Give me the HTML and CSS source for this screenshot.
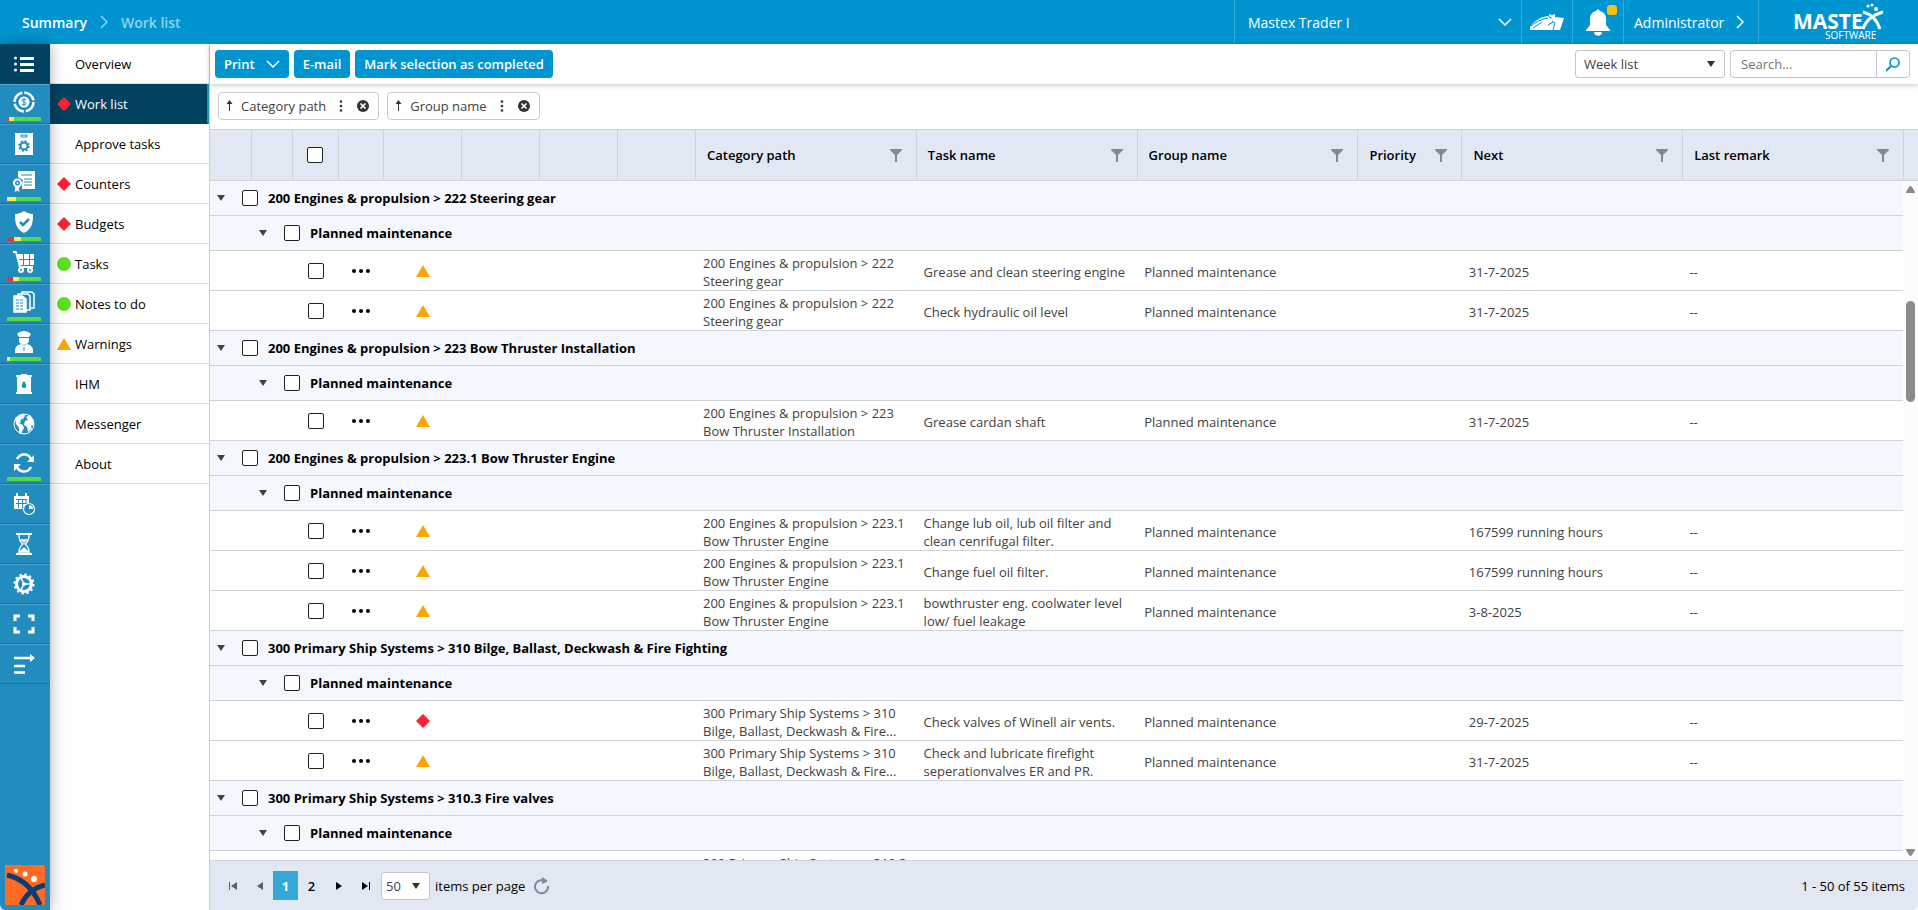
FILE: index.html
```html
<!DOCTYPE html>
<html lang="en">

<head>
    <meta charset="UTF-8">
    <meta name="viewport" content="width=device-width, initial-scale=1.0">
    <title>Work list</title>
    <link rel="stylesheet" href="styles.css">
</head>

<body>
    <!-- shared icons -->
    <svg class="sprite" aria-hidden="true">
        <symbol id="warning" viewBox="0 0 14 12"><path d="M7 0l7 12H0z" fill="#ffa400" /></symbol>
        <symbol id="alert" viewBox="0 0 14 14"><path d="M7 0l7 7-7 7-7-7z" fill="#fd2033" /></symbol>
        <symbol id="ok" viewBox="0 0 14 14"><circle cx="7" cy="7" r="7" fill="#5be022" /></symbol>
        <symbol id="dots" viewBox="0 0 18 4"><circle cx="2" cy="2" r="2" /><circle cx="9" cy="2" r="2" /><circle cx="16" cy="2" r="2" /></symbol>
        <symbol id="caret" viewBox="0 0 8 6"><path d="M0 0h8L4 6z" /></symbol>
        <symbol id="filter" viewBox="0 0 12 13"><path d="M0 0h12v1L7 6v7H5V6L0 1z" /></symbol>
        <symbol id="up" viewBox="0 0 7 12"><path d="M3 11V4H.5l3-4 3 4H4v7z" /></symbol>
        <symbol id="more" viewBox="0 0 4 12"><circle cx="2" cy="1.500" r="1.300" /><circle cx="2" cy="6" r="1.300" /><circle cx="2" cy="10.500" r="1.300" /></symbol>
        <symbol id="remove" viewBox="0 0 12 12"><circle cx="6" cy="6" r="6" /><path d="M3.500 3.500l5 5m0-5l-5 5" stroke="#fff" stroke-width="1.700" /></symbol>
        <symbol id="down" viewBox="0 0 14 8"><path d="M1 1l6 6 6-6" fill="none" stroke="currentColor" stroke-width="1.500" /></symbol>
        <symbol id="next" viewBox="0 0 8 14"><path d="M1 1l6 6-6 6" fill="none" stroke="currentColor" stroke-width="1.500" /></symbol>
    </svg>

    <header class="topbar">
        <nav class="breadcrumb">
            <a href="#">Summary</a>
            <svg width="8" height="14"><use href="#next" /></svg>
            <span>Work list</span>
        </nav>
        <button class="top-item vessel">Mastex Trader I <svg width="14" height="8"><use href="#down" /></svg></button>
        <button class="top-item top-icon" aria-label="Vessels">
            <svg width="34" height="17" viewBox="0 0 34 17" fill="#fff">
                <path d="M0 16v-3C4 7 10 3 18 2l2 2 3 1-1 3-4 3-1 5z" />
                <path d="M19 0l3 1 3-1v3l9 1-1 3-3 9H16l2-5 5-3-1-4-3-2z" />
                <path d="M1 12C6 8 11 5 18 4M3 14l9-6M18 11l5-3 2 1-2 7" fill="none" stroke="#0095d0" stroke-width="1" />
            </svg>
        </button>
        <button class="top-item top-icon" aria-label="Notifications">
            <svg width="24" height="27" viewBox="0 0 24 27" fill="#fff">
                <path d="M12 0l2 2c4 1 6 4 6 8v6l4 5v1H0v-1l4-5v-6c0-4 2-7 6-8zM8 23h8c0 5-8 5-8 0z" />
            </svg>
            <span class="badge"></span>
        </button>
        <button class="top-item user">Administrator <svg width="8" height="14"><use href="#next" /></svg></button>
        <div class="top-item brand">
            <svg width="92" height="38" viewBox="0 0 92 38" fill="#fff">
                <text x="0" y="26" class="brand-name">MASTE</text>
                <text x="32" y="36" class="brand-sub">SOFTWARE</text>
                <path d="M70 9c8 2 14 8 17 17M70 26c3-9 9-14 20-17" fill="none" stroke="#fff" stroke-width="3" />
                <circle cx="75" cy="3" r="1.500" /><circle cx="79" cy="2" r="1.500" /><circle cx="83" cy="6" r="2" />
            </svg>
        </div>
    </header>

    <div class="layout">
        <nav class="rail">
            <a href="#" class="rail-item active" aria-label="Summary">
                <svg width="20" height="16" viewBox="0 0 20 16" fill="#fff"><circle cx="1.500" cy="2" r="1.500" /><circle cx="1.500" cy="8" r="1.500" /><circle cx="1.500" cy="14" r="1.500" /><path d="M6 1h14v3H6zM6 7h14v3H6zM6 13h14v3H6z" /></svg>
            </a>
            <a href="#" class="rail-item has-bar" aria-label="Maintenance">
                <svg width="22" height="22" viewBox="0 0 22 22" fill="none" stroke="#fff">
                    <circle cx="11" cy="11" r="9.500" stroke-width="2.500" stroke-dasharray="12.900 2" />
                    <circle cx="11" cy="11" r="5.500" fill="#fff" stroke="none" />
                    <path d="M13 9c-1-1.500-4-1-4 .5S13 11 13 12.500s-3 2-4 .5M11 7v8" stroke="#228cbf" />
                </svg>
                <span class="bar"><i class="red" style="width: 6%"></i><i class="yellow" style="width: 15%"></i></span>
            </a>
            <a href="#" class="rail-item" aria-label="Components">
                <svg width="18" height="22" viewBox="0 0 18 22">
                    <path d="M0 0h18v22H0z" fill="#fff" /><path d="M6 2h6v2H6z" fill="none" stroke="#228cbf" />
                    <circle cx="9" cy="13" r="3.500" fill="none" stroke="#228cbf" stroke-width="2" />
                    <circle cx="9" cy="13" r="5" fill="none" stroke="#228cbf" stroke-width="1.500" stroke-dasharray="2 1.927" />
                </svg>
            </a>
            <a href="#" class="rail-item has-bar" aria-label="Certificates">
                <svg width="22" height="22" viewBox="0 0 22 22">
                    <path d="M5 0h17v18H9v-5l1-4-5-3z" fill="#fff" /><path d="M8 4h11M11 8h8M11 11h8M11 14h8" stroke="#228cbf" />
                    <path d="M2 14l-1 8 3-2 3 2-1-8" fill="#fff" stroke="#228cbf" /><circle cx="4.500" cy="12" r="3.500" fill="#228cbf" stroke="#fff" stroke-width="2" />
                    <circle cx="4.500" cy="12" r="1" fill="#fff" />
                </svg>
                <span class="bar"><i class="yellow" style="width: 26%"></i></span>
            </a>
            <a href="#" class="rail-item has-bar" aria-label="Safety">
                <svg width="18" height="22" viewBox="0 0 18 22"><path d="M9 0c3 2 6 3 9 3 0 9-1 15-9 19C1 18 0 12 0 3c3 0 6-1 9-3z" fill="#fff" /><path d="M5 11l3 3 6-6" fill="none" stroke="#228cbf" stroke-width="2.500" /></svg>
                <span class="bar"><i class="red" style="width: 22%"></i><i class="yellow" style="width: 18%"></i></span>
            </a>
            <a href="#" class="rail-item has-bar" aria-label="Purchase">
                <svg width="22" height="22" viewBox="0 0 22 22">
                    <path d="M5 3h5v5H5zM11 3h5v5h-5zM17 3h4v5h-4zM6 9h4v5H6zM11 9h5v5h-5zM17 9h4v5h-4z" fill="#fff" />
                    <path d="M0 1h3l4 15h13" fill="none" stroke="#fff" stroke-width="2" /><circle cx="8" cy="19" r="2" fill="#228cbf" stroke="#fff" stroke-width="2" /><circle cx="17" cy="19" r="2" fill="#228cbf" stroke="#fff" stroke-width="2" />
                </svg>
                <span class="bar"><i class="red" style="width: 17%"></i><i class="yellow" style="width: 18%"></i></span>
            </a>
            <a href="#" class="rail-item has-bar" aria-label="Documents">
                <svg width="22" height="22" viewBox="0 0 22 22" fill="#228cbf" stroke="#fff" stroke-width="1.500">
                    <path d="M9 1h10l2 2v14H9z" /><path d="M5 3h10l2 2v14H5z" /><path d="M1 5h8l4 3v13H1z" fill="#fff" /><path d="M3 9h8M3 12h8M3 15h8M3 18h8" stroke="#228cbf" stroke-width="1" stroke-dasharray="3 1" />
                </svg>
                <span class="bar"></span>
            </a>
            <a href="#" class="rail-item has-bar" aria-label="Crew">
                <svg width="18" height="22" viewBox="0 0 18 22" fill="#fff">
                    <path d="M2 3c4-4 10-4 14 0l-2 3H4zM4 7h10v2c0 6-10 7-10 0zM6 13c2 2 4 2 6 0 4 1 6 3 6 7v2H0v-2c0-4 2-6 6-7z" /><path d="M9 16v4M4 6.500h10" stroke="#228cbf" />
                </svg>
                <span class="bar"><i class="yellow" style="width: 8%"></i></span>
            </a>
            <a href="#" class="rail-item" aria-label="Waste">
                <svg width="16" height="21" viewBox="0 0 16 21"><path d="M0 1h5V0h6v1h5v2h-1v15h1v2H0v-2h1V3H0z" fill="#fff" /><path d="M8 7c4 5 2 7 0 7s-4-2 0-7z" fill="#228cbf" /></svg>
            </a>
            <a href="#" class="rail-item" aria-label="Messages">
                <svg width="22" height="22" viewBox="0 0 22 22" fill="#fff"><circle cx="11" cy="11" r="10" fill="none" stroke="#fff" /><path d="M2 5l5-3 4-1 1 2-2 3-3 1 1 2-2 1 4 2 1 3-3 6-2-1v-5l-3-4zM13 4l4-2 4 6v6l-2-2-1 1 1 3-4 3-1-5-3-2 1-4 3-1z" /></svg>
            </a>
            <a href="#" class="rail-item has-bar" aria-label="Synchronise">
                <svg width="20" height="20" viewBox="0 0 20 20"><path d="M3 6C7-1 15 1 17 6M17 14c-4 7-12 5-14 0" fill="none" stroke="#fff" stroke-width="2.500" /><path d="M20 2v7h-7zM0 18v-7h7z" fill="#fff" /></svg>
                <span class="bar"></span>
            </a>
            <a href="#" class="rail-item" aria-label="Planning">
                <svg width="22" height="22" viewBox="0 0 22 22">
                    <path d="M1 3h15v13H1z" fill="#fff" /><path d="M3 6.500h11M3 10.500h11M5.500 7v8M9.500 7v8M13 7v4" stroke="#228cbf" /><path d="M4 0v4M13 0v4" stroke="#fff" stroke-width="2" />
                    <circle cx="16" cy="16" r="5.500" fill="#228cbf" stroke="#fff" stroke-width="1.200" /><path d="M16 12v4h4c0-3-2-4-4-4z" fill="#fff" />
                </svg>
            </a>
            <a href="#" class="rail-item" aria-label="Hours">
                <svg width="16" height="22" viewBox="0 0 16 22" fill="none" stroke="#fff" stroke-width="1.500"><path d="M0 1h16M0 21h16" stroke-width="2" /><path d="M3 2c0 5 1 7 4 9-3 2-4 4-4 9M13 2c0 5-1 7-4 9 3 2 4 4 4 9" /><path d="M4 19l4-4 4 4zM6 7h4l-2 2z" fill="#fff" /></svg>
            </a>
            <a href="#" class="rail-item" aria-label="Settings">
                <svg width="22" height="22" viewBox="0 0 22 22" fill="none" stroke="#fff"><circle cx="11" cy="11" r="7.500" stroke-width="3" /><circle cx="11" cy="11" r="9.500" stroke-width="2" stroke-dasharray="2.500 2.474" /><path d="M11 11h7M11 11L8 5M11 11l-3 6" stroke-width="1.500" /><circle cx="11" cy="11" r="1.500" fill="#fff" /></svg>
            </a>
            <a href="#" class="rail-item" aria-label="Full screen">
                <svg width="22" height="20" viewBox="0 0 22 20" fill="none" stroke="#fff" stroke-width="3"><path d="M2 7V2h5M15 2h5v5M20 13v5h-5M7 18H2v-5" /></svg>
            </a>
            <a href="#" class="rail-item" aria-label="Expand menu">
                <svg width="21" height="20" viewBox="0 0 21 20" fill="none" stroke="#fff" stroke-width="2.500"><path d="M0 4h18M0 12h11M0 18.500h11" /><path d="M16 0l5 4-5 4z" fill="#fff" stroke="none" /></svg>
            </a>
            <svg class="rail-logo" width="40" height="40" viewBox="0 0 40 40"><rect width="40" height="40" rx="1" fill="#ff6b22" /><g fill="none" stroke="#0b3c78"><path d="M2 10c17 4 27 15 33 30" stroke-width="5" /><path d="M16 40c5-11 12-17 24-20" stroke-width="5" /></g><g fill="#fff"><circle cx="11" cy="6" r="2" /><circle cx="20" cy="9" r="2.500" /><circle cx="29" cy="14" r="3" /></g></svg>
        </nav>

        <nav class="menu">
            <a href="#" class="menu-item">Overview</a>
            <a href="#" class="menu-item active"><svg width="14" height="14"><use href="#alert" /></svg>Work list</a>
            <a href="#" class="menu-item">Approve tasks</a>
            <a href="#" class="menu-item"><svg width="14" height="14"><use href="#alert" /></svg>Counters</a>
            <a href="#" class="menu-item"><svg width="14" height="14"><use href="#alert" /></svg>Budgets</a>
            <a href="#" class="menu-item"><svg width="14" height="14"><use href="#ok" /></svg>Tasks</a>
            <a href="#" class="menu-item"><svg width="14" height="14"><use href="#ok" /></svg>Notes to do</a>
            <a href="#" class="menu-item"><svg width="14" height="12"><use href="#warning" /></svg>Warnings</a>
            <a href="#" class="menu-item">IHM</a>
            <a href="#" class="menu-item">Messenger</a>
            <a href="#" class="menu-item">About</a>
        </nav>

        <main class="content">
            <div class="toolbar">
                <button class="btn">Print <svg width="14" height="8"><use href="#down" /></svg></button>
                <button class="btn">E-mail</button>
                <button class="btn">Mark selection as completed</button>
                <div class="select period">
                    <select aria-label="Period">
                        <option>Week list</option>
                    </select>
                    <svg width="8" height="6"><use href="#caret" /></svg>
                </div>
                <form class="search">
                    <input type="text" placeholder="Search..." aria-label="Search">
                    <button type="button" aria-label="Search"><svg width="14" height="15" viewBox="0 0 14 15" fill="none" stroke="#0a8fc9"><circle cx="8.500" cy="5.500" r="4.500" stroke-width="1.700" /><path d="M5 9l-5 5" stroke-width="2" /></svg></button>
                </form>
            </div>

            <div class="grouping">
                <div class="chip"><svg width="7" height="12"><use href="#up" /></svg><span>Category path</span><svg width="4" height="12"><use href="#more" /></svg><svg width="12" height="12"><use href="#remove" /></svg></div>
                <div class="chip"><svg width="7" height="12"><use href="#up" /></svg><span>Group name</span><svg width="4" height="12"><use href="#more" /></svg><svg width="12" height="12"><use href="#remove" /></svg></div>
            </div>

            <div class="grid-head">
                <table>
                    <colgroup><col class="c-indent"><col class="c-indent2"><col class="c-check"><col class="c-menu"><col class="c-flag"><col class="c-flag"><col class="c-flag"><col class="c-flag"><col><col><col><col class="c-prio"><col><col></colgroup>
                    <thead>
                        <tr>
                            <th></th>
                            <th></th>
                            <th class="center"><input type="checkbox" aria-label="Select all"></th>
                            <th></th>
                            <th></th>
                            <th></th>
                            <th></th>
                            <th></th>
                            <th><div>Category path <svg width="12" height="13"><use href="#filter" /></svg></div></th>
                            <th><div>Task name <svg width="12" height="13"><use href="#filter" /></svg></div></th>
                            <th><div>Group name <svg width="12" height="13"><use href="#filter" /></svg></div></th>
                            <th><div>Priority <svg width="12" height="13"><use href="#filter" /></svg></div></th>
                            <th><div>Next <svg width="12" height="13"><use href="#filter" /></svg></div></th>
                            <th><div>Last remark <svg width="12" height="13"><use href="#filter" /></svg></div></th>
                        </tr>
                    </thead>
                </table>
            </div>

            <div class="grid-body">
                <div class="rows">
                    <table>
                        <colgroup><col class="c-indent"><col class="c-indent2"><col class="c-check"><col class="c-menu"><col class="c-flag"><col class="c-flag"><col class="c-flag"><col class="c-flag"><col><col><col><col class="c-prio"><col><col></colgroup>
                        <tbody>
                            <tr class="group">
                                <td colspan="14"><div><svg width="8" height="6"><use href="#caret" /></svg><input type="checkbox" id="g1"><label for="g1">200 Engines &amp; propulsion &gt; 222 Steering gear</label></div></td>
                            </tr>
                            <tr class="group sub">
                                <td colspan="14"><div><svg width="8" height="6"><use href="#caret" /></svg><input type="checkbox" id="g1s"><label for="g1s">Planned maintenance</label></div></td>
                            </tr>
                            <tr>
                                <td colspan="2"></td>
                                <td class="center"><input type="checkbox" aria-label="Select task"></td>
                                <td class="center"><svg width="18" height="4"><use href="#dots" /></svg></td>
                                <td class="center"><svg width="14" height="12"><use href="#warning" /></svg></td>
                                <td colspan="3"></td>
                                <td><div class="text">200 Engines &amp; propulsion &gt; 222 Steering gear</div></td>
                                <td><div class="text">Grease and clean steering engine</div></td>
                                <td><div class="text">Planned maintenance</div></td>
                                <td></td>
                                <td><div class="text">31-7-2025</div></td>
                                <td><div class="text">--</div></td>
                            </tr>
                            <tr>
                                <td colspan="2"></td>
                                <td class="center"><input type="checkbox" aria-label="Select task"></td>
                                <td class="center"><svg width="18" height="4"><use href="#dots" /></svg></td>
                                <td class="center"><svg width="14" height="12"><use href="#warning" /></svg></td>
                                <td colspan="3"></td>
                                <td><div class="text">200 Engines &amp; propulsion &gt; 222 Steering gear</div></td>
                                <td><div class="text">Check hydraulic oil level</div></td>
                                <td><div class="text">Planned maintenance</div></td>
                                <td></td>
                                <td><div class="text">31-7-2025</div></td>
                                <td><div class="text">--</div></td>
                            </tr>
                            <tr class="group">
                                <td colspan="14"><div><svg width="8" height="6"><use href="#caret" /></svg><input type="checkbox" id="g2"><label for="g2">200 Engines &amp; propulsion &gt; 223 Bow Thruster Installation</label></div></td>
                            </tr>
                            <tr class="group sub">
                                <td colspan="14"><div><svg width="8" height="6"><use href="#caret" /></svg><input type="checkbox" id="g2s"><label for="g2s">Planned maintenance</label></div></td>
                            </tr>
                            <tr>
                                <td colspan="2"></td>
                                <td class="center"><input type="checkbox" aria-label="Select task"></td>
                                <td class="center"><svg width="18" height="4"><use href="#dots" /></svg></td>
                                <td class="center"><svg width="14" height="12"><use href="#warning" /></svg></td>
                                <td colspan="3"></td>
                                <td><div class="text">200 Engines &amp; propulsion &gt; 223 Bow Thruster Installation</div></td>
                                <td><div class="text">Grease cardan shaft</div></td>
                                <td><div class="text">Planned maintenance</div></td>
                                <td></td>
                                <td><div class="text">31-7-2025</div></td>
                                <td><div class="text">--</div></td>
                            </tr>
                            <tr class="group">
                                <td colspan="14"><div><svg width="8" height="6"><use href="#caret" /></svg><input type="checkbox" id="g3"><label for="g3">200 Engines &amp; propulsion &gt; 223.1 Bow Thruster Engine</label></div></td>
                            </tr>
                            <tr class="group sub">
                                <td colspan="14"><div><svg width="8" height="6"><use href="#caret" /></svg><input type="checkbox" id="g3s"><label for="g3s">Planned maintenance</label></div></td>
                            </tr>
                            <tr>
                                <td colspan="2"></td>
                                <td class="center"><input type="checkbox" aria-label="Select task"></td>
                                <td class="center"><svg width="18" height="4"><use href="#dots" /></svg></td>
                                <td class="center"><svg width="14" height="12"><use href="#warning" /></svg></td>
                                <td colspan="3"></td>
                                <td><div class="text">200 Engines &amp; propulsion &gt; 223.1 Bow Thruster Engine</div></td>
                                <td><div class="text">Change lub oil, lub oil filter and clean cenrifugal filter.</div></td>
                                <td><div class="text">Planned maintenance</div></td>
                                <td></td>
                                <td><div class="text">167599 running hours</div></td>
                                <td><div class="text">--</div></td>
                            </tr>
                            <tr>
                                <td colspan="2"></td>
                                <td class="center"><input type="checkbox" aria-label="Select task"></td>
                                <td class="center"><svg width="18" height="4"><use href="#dots" /></svg></td>
                                <td class="center"><svg width="14" height="12"><use href="#warning" /></svg></td>
                                <td colspan="3"></td>
                                <td><div class="text">200 Engines &amp; propulsion &gt; 223.1 Bow Thruster Engine</div></td>
                                <td><div class="text">Change fuel oil filter.</div></td>
                                <td><div class="text">Planned maintenance</div></td>
                                <td></td>
                                <td><div class="text">167599 running hours</div></td>
                                <td><div class="text">--</div></td>
                            </tr>
                            <tr>
                                <td colspan="2"></td>
                                <td class="center"><input type="checkbox" aria-label="Select task"></td>
                                <td class="center"><svg width="18" height="4"><use href="#dots" /></svg></td>
                                <td class="center"><svg width="14" height="12"><use href="#warning" /></svg></td>
                                <td colspan="3"></td>
                                <td><div class="text">200 Engines &amp; propulsion &gt; 223.1 Bow Thruster Engine</div></td>
                                <td><div class="text">bowthruster eng. coolwater level low/ fuel leakage</div></td>
                                <td><div class="text">Planned maintenance</div></td>
                                <td></td>
                                <td><div class="text">3-8-2025</div></td>
                                <td><div class="text">--</div></td>
                            </tr>
                            <tr class="group">
                                <td colspan="14"><div><svg width="8" height="6"><use href="#caret" /></svg><input type="checkbox" id="g4"><label for="g4">300 Primary Ship Systems &gt; 310 Bilge, Ballast, Deckwash &amp; Fire Fighting</label></div></td>
                            </tr>
                            <tr class="group sub">
                                <td colspan="14"><div><svg width="8" height="6"><use href="#caret" /></svg><input type="checkbox" id="g4s"><label for="g4s">Planned maintenance</label></div></td>
                            </tr>
                            <tr>
                                <td colspan="2"></td>
                                <td class="center"><input type="checkbox" aria-label="Select task"></td>
                                <td class="center"><svg width="18" height="4"><use href="#dots" /></svg></td>
                                <td class="center"><svg width="14" height="14"><use href="#alert" /></svg></td>
                                <td colspan="3"></td>
                                <td><div class="text">300 Primary Ship Systems &gt; 310 Bilge, Ballast, Deckwash &amp; Fire...</div></td>
                                <td><div class="text">Check valves of Winell air vents.</div></td>
                                <td><div class="text">Planned maintenance</div></td>
                                <td></td>
                                <td><div class="text">29-7-2025</div></td>
                                <td><div class="text">--</div></td>
                            </tr>
                            <tr>
                                <td colspan="2"></td>
                                <td class="center"><input type="checkbox" aria-label="Select task"></td>
                                <td class="center"><svg width="18" height="4"><use href="#dots" /></svg></td>
                                <td class="center"><svg width="14" height="12"><use href="#warning" /></svg></td>
                                <td colspan="3"></td>
                                <td><div class="text">300 Primary Ship Systems &gt; 310 Bilge, Ballast, Deckwash &amp; Fire...</div></td>
                                <td><div class="text">Check and lubricate firefight seperationvalves ER and PR.</div></td>
                                <td><div class="text">Planned maintenance</div></td>
                                <td></td>
                                <td><div class="text">31-7-2025</div></td>
                                <td><div class="text">--</div></td>
                            </tr>
                            <tr class="group">
                                <td colspan="14"><div><svg width="8" height="6"><use href="#caret" /></svg><input type="checkbox" id="g5"><label for="g5">300 Primary Ship Systems &gt; 310.3 Fire valves</label></div></td>
                            </tr>
                            <tr class="group sub">
                                <td colspan="14"><div><svg width="8" height="6"><use href="#caret" /></svg><input type="checkbox" id="g5s"><label for="g5s">Planned maintenance</label></div></td>
                            </tr>
                            <tr>
                                <td colspan="8"></td>
                                <td><div class="text">300 Primary Ship Systems &gt; 310.3 Fire valves</div></td>
                                <td colspan="5"></td>
                            </tr>
                        </tbody>
                    </table>
                </div>
                <div class="scrollbar">
                    <svg width="9" height="7" viewBox="0 0 9 7"><path d="M3 1q1.500-2 3 0l3 5v1H0V6z" /></svg>
                    <span class="thumb"></span>
                    <svg width="9" height="7" viewBox="0 0 9 7"><path d="M3 6q1.500 2 3 0l3-5V0H0v1z" /></svg>
                </div>
            </div>

            <footer class="pager">
                <button disabled aria-label="First page"><svg width="8" height="8"><path d="M0 0h1v8H0zM8 0v8L2 4z" /></svg></button>
                <button disabled aria-label="Previous page"><svg width="6" height="8"><path d="M6 0v8L0 4z" /></svg></button>
                <button class="current">1</button>
                <button>2</button>
                <button aria-label="Next page"><svg width="6" height="8"><path d="M0 0v8l6-4z" /></svg></button>
                <button aria-label="Last page"><svg width="8" height="8"><path d="M7 0h1v8H7zM0 0v8l6-4z" /></svg></button>
                <div class="select size">
                    <select id="pageSize">
                        <option>50</option>
                    </select>
                    <svg width="8" height="6"><use href="#caret" /></svg>
                </div>
                <label for="pageSize">items per page</label>
                <button class="refresh" aria-label="Refresh"><svg width="16" height="18" viewBox="0 0 16 18"><path d="M12 5A6.500 6.500 0 1 0 14 9" fill="none" stroke="#7c8a99" stroke-width="2" /><path d="M8 0l6 4-6 3z" fill="#7c8a99" /></svg></button>
                <span class="info">1 - 50 of 55 items</span>
            </footer>
        </main>
    </div>
</body>

</html>
```
FILE: styles.css
```css
* {
    box-sizing: border-box;
}

body {
    font-family: 'Open Sans', 'Noto Sans', sans-serif;
    font-size: 13px;
    margin: 0;
    height: 100vh;
    display: flex;
    flex-direction: column;
    overflow: hidden;
    background-color: #fff;
    color: #000;
}

svg {
    display: block;
    flex: none;
}

.sprite {
    position: absolute;
    width: 0;
    height: 0;
}

a {
    color: inherit;
    text-decoration: none;
}

button,
input,
select {
    font: inherit;
    color: inherit;
    margin: 0;
}

button {
    border: none;
    background: none;
    padding: 0;
    cursor: pointer;
}

input[type="checkbox"] {
    appearance: none;
    flex: none;
    display: block;
    width: 16px;
    height: 16px;
    border: 1px solid #222;
    border-radius: 2px;
    background-color: #fff;
}

/* top bar */
.topbar {
    display: flex;
    flex: none;
    height: 44px;
    background-color: #0095d0;
    color: #fff;
    font-size: 14px;
}

.breadcrumb {
    display: flex;
    align-items: center;
    gap: 13px;
    padding-left: 22px;
    flex: 1;
    font-weight: 600;
}

.breadcrumb span,
.breadcrumb svg {
    color: #8fd3f1;
}

.top-item {
    display: flex;
    align-items: center;
    justify-content: center;
    border-left: 1px solid #33aada;
}

.vessel {
    width: 287px;
    justify-content: space-between;
    padding: 0 9px 0 13px;
}

.top-icon {
    width: 51px;
    position: relative;
}

.badge {
    position: absolute;
    top: 5px;
    right: 6px;
    width: 10px;
    height: 10px;
    border-radius: 3px;
    background-color: #fdbf0f;
}

.user {
    width: 135px;
    justify-content: space-between;
    padding: 0 14px 0 10px;
}

.brand {
    width: 160px;
}

.brand-name {
    font-size: 21px;
    font-weight: 700;
}

.brand-sub {
    font-size: 10px;
}

.layout {
    display: flex;
    flex: 1;
    min-height: 0;
}

/* icon rail */
.rail {
    display: flex;
    flex-direction: column;
    align-items: center;
    width: 50px;
    flex: none;
    background-color: #228cbf;
    border-bottom-left-radius: 6px;
    box-shadow: 0 0 14px rgba(0, 0, 0, 0.35);
    z-index: 1;
}

.rail-item {
    display: flex;
    flex-direction: column;
    align-items: center;
    justify-content: center;
    gap: 4px;
    width: 100%;
    height: 40px;
    padding-right: 2px;
    border-top: 1px solid #4ba3cd;
    border-bottom: 1px solid #1a74a0;
}

.rail-item.active {
    background-color: #00425f;
    border-color: #00425f;
}

.rail-item.has-bar {
    justify-content: flex-end;
    padding-bottom: 2px;
}

.bar {
    display: flex;
    width: 34px;
    height: 4px;
    background-color: #56db42;
}

.bar .red {
    background-color: #e0323f;
}

.bar .yellow {
    background-color: #f5f04f;
}

.rail-logo {
    margin-top: auto;
    margin-bottom: 5px;
}

/* side menu */
.menu {
    width: 160px;
    flex: none;
    border-right: 1px solid #cccfd2;
}

.menu-item {
    display: grid;
    grid-template-columns: 14px auto;
    justify-content: start;
    align-items: center;
    column-gap: 4px;
    height: 40px;
    padding: 0 7px;
    border-bottom: 1px solid #dee0e2;
}

/* items without a status icon keep their text in the second column */
.menu-item:not(:has(svg))::before {
    content: "";
}

.menu-item.active {
    background-color: #00425f;
    border-bottom-color: #00425f;
    border-right: 2px solid #1b93c9;
    color: #fff;
}

.content {
    display: flex;
    flex-direction: column;
    flex: 1;
    min-width: 0;
}

/* toolbar */
.toolbar {
    display: flex;
    align-items: center;
    gap: 5px;
    flex: none;
    height: 40px;
    padding: 0 8px 0 5px;
    box-shadow: 0 1px 5px rgba(0, 0, 0, 0.25);
}

.btn {
    display: flex;
    align-items: center;
    gap: 11px;
    height: 28px;
    padding: 0 9px;
    border-radius: 4px;
    background-color: #0095d0;
    color: #fff;
    font-weight: 600;
}

.select {
    position: relative;
}

.select select {
    appearance: none;
    width: 100%;
    height: 28px;
    border: 1px solid #c4c7ca;
    border-radius: 3px;
    background-color: #fff;
    color: #424242;
}

.select svg {
    position: absolute;
    top: 11px;
    right: 10px;
    fill: #333;
    pointer-events: none;
}

.period {
    width: 150px;
    margin-left: auto;
}

.period select {
    padding-left: 8px;
}

.search {
    display: flex;
    width: 180px;
    height: 28px;
    border: 1px solid #c4c7ca;
    border-radius: 4px;
}

.search input {
    flex: 1;
    min-width: 0;
    border: none;
    background: none;
    padding: 0 10px;
}

.search input::placeholder {
    color: #757575;
}

.search button {
    display: flex;
    align-items: center;
    justify-content: center;
    width: 33px;
    border-left: 1px solid #c4c7ca;
}

/* group chips */
.grouping {
    display: flex;
    align-items: center;
    gap: 8px;
    flex: none;
    height: 45px;
    padding: 0 8px 1px;
}

.chip {
    display: flex;
    align-items: center;
    height: 28px;
    padding: 0 9px 0 7px;
    border: 1px solid #c9cccf;
    border-radius: 4px;
    color: #424242;
    fill: #333;
}

.chip span {
    margin: 0 13px 0 8px;
}

.chip svg:last-child {
    margin-left: 14px;
}

/* grid */
table {
    width: 100%;
    table-layout: fixed;
    border-collapse: separate;
    border-spacing: 0;
}

.c-indent {
    width: 42px;
}

.c-indent2 {
    width: 41px;
}

.c-check {
    width: 46px;
}

.c-menu {
    width: 45px;
}

.c-flag {
    width: 78px;
}

.c-prio {
    width: 104px;
}

.grid-head {
    flex: none;
    padding-right: 14px;
    border-top: 1px solid #cfd2d6;
    border-bottom: 1px solid #cfd2d6;
    background-color: #e1e8f3;
}

th {
    height: 50px;
    padding: 0 14px 0 11px;
    border-right: 1px solid #cfd2d6;
    text-align: left;
    font-weight: 600;
}

th div {
    display: flex;
    align-items: center;
    justify-content: space-between;
    fill: #7d8a97;
}

.center {
    padding: 0 1px 0 0;
}

.center > * {
    margin: 0 auto;
}

.grid-body {
    display: flex;
    flex: 1;
    min-height: 0;
}

.rows {
    flex: 1;
    overflow: hidden;
}

td {
    height: 40px;
    padding: 3px 7px 0;
    border-bottom: 1px solid #cfd2d6;
    color: #424242;
}

td.center {
    padding: 0 1px 0 0;
    fill: #000;
}

.text {
    display: -webkit-box;
    -webkit-line-clamp: 2;
    -webkit-box-orient: vertical;
    overflow: hidden;
    line-height: 18px;
}

.group td {
    height: 35px;
    padding-top: 0;
    background-color: #f4f7fd;
    color: #000;
    font-weight: 700;
}

.group div {
    display: flex;
    align-items: center;
    fill: #424242;
}

.group input {
    margin: 0 10px 0 17px;
}

.sub td {
    padding-left: 49px;
}

.scrollbar {
    display: flex;
    flex-direction: column;
    align-items: center;
    width: 15px;
    padding: 5px 0 4px;
    background-color: #fcfcfc;
    fill: #8b8b8b;
}

.thumb {
    width: 9px;
    height: 15%;
    margin: 108px 0 auto;
    border-radius: 5px;
    background-color: #8b8b8b;
}

/* pager */
.pager {
    display: flex;
    align-items: center;
    flex: none;
    height: 50px;
    padding: 0 13px 0 9px;
    border-top: 1px solid #cfd2d6;
    border-bottom-right-radius: 6px;
    background-color: #e1e8f3;
}

.pager button {
    display: flex;
    align-items: center;
    justify-content: center;
    width: 27px;
    height: 29px;
    font-weight: 600;
}

.pager button:disabled {
    fill: #59616b;
}

.pager .current {
    width: 25px;
    background-color: #35a8d8;
    color: #fff;
    font-weight: 700;
}

.size {
    width: 49px;
    margin: 0 5px 0 2px;
}

.size select {
    padding-left: 4px;
}

.pager .refresh {
    width: 16px;
    margin-left: 9px;
}

.info {
    margin-left: auto;
}
```
